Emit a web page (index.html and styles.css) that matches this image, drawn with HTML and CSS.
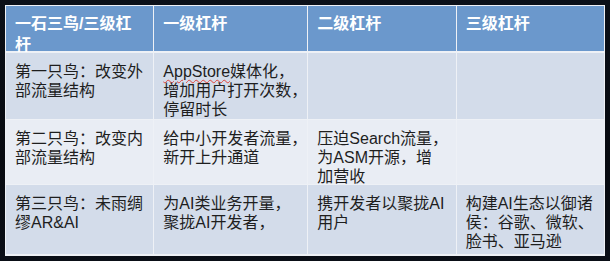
FILE: index.html
```html
<!DOCTYPE html>
<html lang="zh-CN">
<head>
<meta charset="utf-8">
<title>一石三鸟</title>
<link rel="stylesheet" href="styles.css">
</head>
<body>
<div class="table">
  <div class="cell head">一石三鸟/三级杠<br>杆</div>
  <div class="cell head">一级杠杆</div>
  <div class="cell head">二级杠杆</div>
  <div class="cell head">三级杠杆</div>

  <div class="cell odd">第一只鸟：改变外<br>部流量结构</div>
  <div class="cell odd"><span class="spell">AppStore</span>媒体化，<br>增加用户打开次数，<br>停留时长</div>
  <div class="cell odd"></div>
  <div class="cell odd"></div>

  <div class="cell even">第二只鸟：改变内<br>部流量结构</div>
  <div class="cell even">给中小开发者流量，<br>新开上升通道</div>
  <div class="cell even">压迫Search流量，<br>为ASM开源，增<br>加营收</div>
  <div class="cell even"></div>

  <div class="cell odd">第三只鸟：未雨绸<br>缪AR&amp;AI</div>
  <div class="cell odd">为AI类业务开量，<br>聚拢AI开发者，</div>
  <div class="cell odd">携开发者以聚拢AI<br>用户</div>
  <div class="cell odd">构建AI生态以御诸<br>侯：谷歌、微软、<br>脸书、亚马逊</div>
</div>
</body>
</html>
```

FILE: styles.css
```css
html, body {
  margin: 0;
  padding: 0;
}
body {
  width: 610px;
  height: 261px;
  background: linear-gradient(180deg, #0b1019 0%, #070a10 60%, #0a0e16 100%);
  font-family: "Liberation Sans", "Noto Sans CJK SC", sans-serif;
  overflow: hidden;
}
.table {
  margin: 5px 0 0 5px;
  width: 600px;
  height: 251px;
  box-sizing: border-box;
  padding: 1px;
  background: #eef1f6;
  display: grid;
  grid-template-columns: repeat(4, 1fr);
  grid-template-rows: 46px 66px 64px 69px;
  gap: 1px;
}
.cell {
  white-space: nowrap;
  font-size: 16px;
  line-height: 19px;
  color: #1e1e1e;
  padding: 9px 0 0 9px;
  overflow: visible;
}
.head {
  background: #6b98cc;
  color: #ffffff;
  font-weight: bold;
  line-height: 21px;
  padding-top: 7px;
  margin-bottom: 1px;
}
.odd {
  background: #d3dcea;
}
.even {
  background: #e9edf4;
}
.spell {
  text-decoration: underline wavy #e0413a;
  text-decoration-thickness: 1px;
  text-underline-offset: 2px;
}
```
